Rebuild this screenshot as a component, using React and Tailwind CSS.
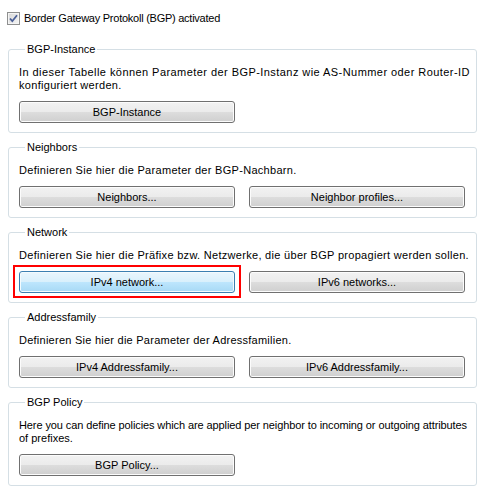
import React from "react";

const font = { fontFamily: '"Liberation Sans", Arial, sans-serif' };

function Btn({ children, active }) {
  return (
    <button
      className={
        "w-[216px] h-[22px] rounded-[3px] border text-[11px] text-black leading-none flex items-center justify-center " +
        (active
          ? "border-[#3c7fb1] bg-[linear-gradient(to_bottom,#eaf6fd_0%,#d9f0fc_50%,#bee6fd_50%,#a7d9f5_100%)] shadow-[inset_0_0_0_1px_#f4fbfe]"
          : "border-[#707070] bg-[linear-gradient(to_bottom,#f2f2f2_0%,#ebebeb_50%,#dddddd_50%,#cfcfcf_100%)] shadow-[inset_0_0_0_1px_#fcfcfc]")
      }
    >
      {children}
    </button>
  );
}

function Group({ title, children }) {
  return (
    <fieldset className="border border-[#d5dfe5] rounded-[3px] pl-[10px] pr-[6px] pb-[9px] pt-[10px]">
      <legend className="ml-[6px] px-[2px] text-[11px] leading-[13px]">{title}</legend>
      {children}
    </fieldset>
  );
}

function Text({ children }) {
  return <div className="text-[11px] leading-[13px] mb-[9px] whitespace-nowrap">{children}</div>;
}

export default function App() {
  return (
    <div className="w-[485px] h-[496px] bg-white text-black px-[8px] pt-[12px]" style={font}>
      <div className="flex items-center gap-[4px] h-[13px] -ml-[1px]">
        <svg width="13" height="13" viewBox="0 0 13 13">
          <defs>
            <linearGradient id="cb" x1="0" y1="0" x2="1" y2="1">
              <stop offset="0" stopColor="#d6d6d6" />
              <stop offset="1" stopColor="#f6f6f6" />
            </linearGradient>
          </defs>
          <rect x="0.5" y="0.5" width="12" height="12" fill="url(#cb)" stroke="#8e8f8f" />
          <rect x="1.5" y="1.5" width="10" height="10" fill="none" stroke="#f4f4f4" />
          <path d="M3 6.5 L5.3 9.2 L10 3.3" fill="none" stroke="#4a5f97" strokeWidth="1.8" />
        </svg>
        <span className="text-[11px] leading-[13px] tracking-[-0.25px]">Border Gateway Protokoll (BGP) activated</span>
      </div>

      <div className="mt-[18px] flex flex-col gap-[8px]">
        <Group title="BGP-Instance">
          <Text>
            <div className="tracking-[0.44px]">
              In dieser Tabelle können Parameter der BGP-Instanz wie AS-Nummer oder Router-ID
            </div>
            <div className="tracking-[0.3px]">konfiguriert werden.</div>
          </Text>
          <Btn>BGP-Instance</Btn>
        </Group>

        <Group title="Neighbors">
          <Text>
            <div className="tracking-[0.3px]">Definieren Sie hier die Parameter der BGP-Nachbarn.</div>
          </Text>
          <div className="flex gap-[14px]">
            <Btn>Neighbors...</Btn>
            <Btn>Neighbor profiles...</Btn>
          </div>
        </Group>

        <Group title="Network">
          <Text>
            <div className="tracking-[0.3px]">
              Definieren Sie hier die Präfixe bzw. Netzwerke, die über BGP propagiert werden sollen.
            </div>
          </Text>
          <div className="flex gap-[14px]">
            <div className="relative">
              <Btn active>IPv4 network...</Btn>
              <div className="absolute -inset-x-[6px] -top-[6px] -bottom-[5px] border-2 border-[#ff0000] pointer-events-none" />
            </div>
            <Btn>IPv6 networks...</Btn>
          </div>
        </Group>

        <Group title="Addressfamily">
          <Text>
            <div className="tracking-[0.25px]">Definieren Sie hier die Parameter der Adressfamilien.</div>
          </Text>
          <div className="flex gap-[14px]">
            <Btn>IPv4 Addressfamily...</Btn>
            <Btn>IPv6 Addressfamily...</Btn>
          </div>
        </Group>

        <Group title="BGP Policy">
          <Text>
            <div className="tracking-[-0.1px]">
              Here you can define policies which are applied per neighbor to incoming or outgoing attributes
            </div>
            <div>of prefixes.</div>
          </Text>
          <Btn>BGP Policy...</Btn>
        </Group>
      </div>
    </div>
  );
}
